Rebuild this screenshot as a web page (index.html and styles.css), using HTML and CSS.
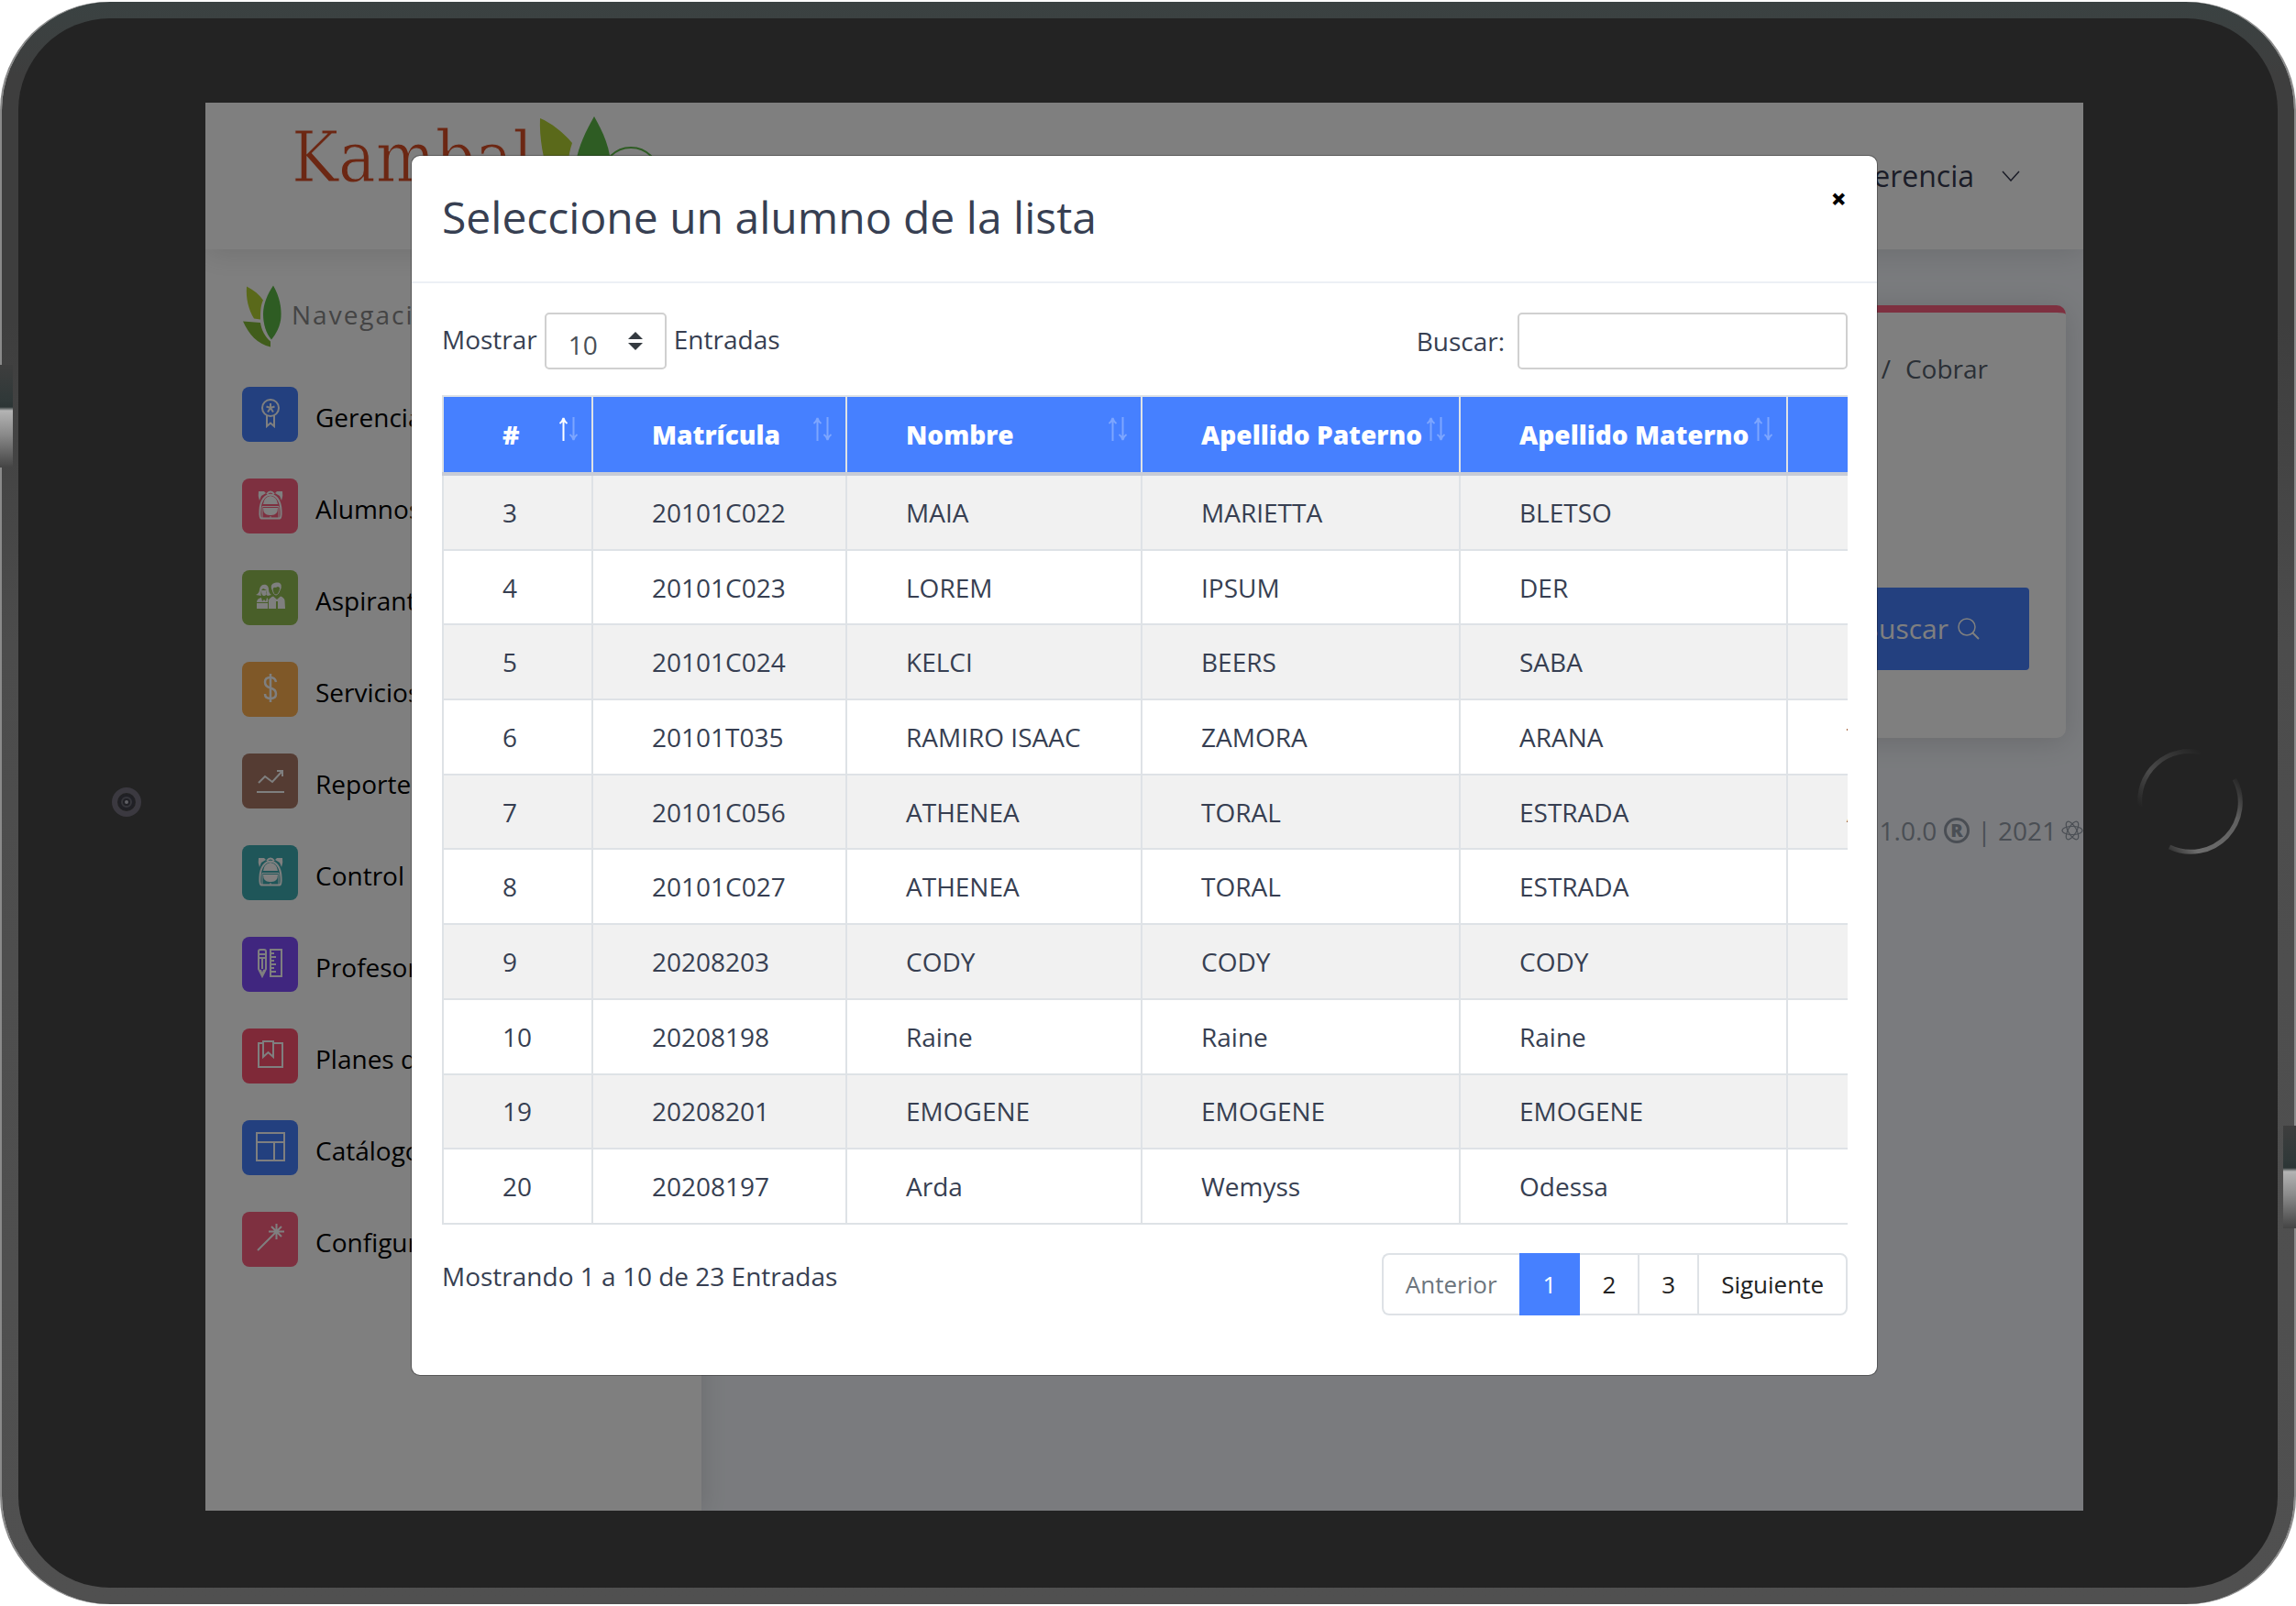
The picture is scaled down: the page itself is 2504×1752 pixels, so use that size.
FILE: index.html
```html
<!DOCTYPE html>
<html lang="es">
<head>
<meta charset="utf-8">
<title>Kambal - Cobrar</title>
<link rel="stylesheet" href="styles.css">
</head>
<body>
<svg class="sprite" aria-hidden="true">
  <symbol id="i-leaves" viewBox="0 0 42 67">
    <path d="M4 1C12 5 18 10 22 16C19 22 19 30 19 37L12 36C6 26 3 14 4 1Z" fill="#b4d334"/>
    <path d="M33 0C40 12 42 24 41.500 34C41 44 36 53 31 59C25 52 22 42 22 31C22 20 27 9 33 0Z" fill="#5cb946"/>
    <path d="M0 39L19 40.500C20 48 24 56 30 61L30 67C16 64 6 53 0 39Z" fill="#82bb37"/>
  </symbol>
  <symbol id="i-backpack" viewBox="0 0 32 32">
    <path fill="none" stroke="currentColor" stroke-width="2" d="M12 4Q16-1 20 4M6 30.500Q4 30 4.500 22C5-1 27-1 27.500 22Q28 30 26 30.500Z"/>
    <path fill="currentColor" d="M3 1L9 1L11 3L6 6L4 11Q2 6 3 1ZM29 1L23 1L21 3L26 6L28 11Q30 6 29 1ZM8 15Q9 7 16 6Q23 7 24 15ZM8 19H24Q24 27 17 27H15Q8 27 8 19Z"/>
    <path fill="none" stroke="currentColor" d="M7 30V17.500H25V30M16 28V30"/>
  </symbol>
  <symbol id="i-layout" viewBox="0 0 32 32">
    <path fill="none" stroke="currentColor" stroke-width="2" d="M1 1H31V31H1ZM1 11H31M20 11V31"/>
  </symbol>
  <symbol id="i-sort-asc" viewBox="0 0 10 26">
    <path fill="none" stroke="currentColor" stroke-width="2" d="M5 26V2M1 7Q4 5 5 1Q6 5 9 7"/>
  </symbol>
  <symbol id="i-sort-desc" viewBox="0 0 10 26">
    <path fill="none" stroke="currentColor" stroke-width="2" d="M5 0V24M1 19Q4 21 5 25Q6 21 9 19"/>
  </symbol>
</svg>

<div class="device">
  <span class="side-key side-key-left"></span>
  <span class="side-key side-key-right"></span>
  <div class="bezel">
    <div class="camera">
      <svg width="34" height="34" viewBox="0 0 34 34"><circle cx="17" cy="17" r="13" fill="none" stroke="#3b3940" stroke-width="6"/><circle cx="17" cy="17" r="9" fill="#202026"/><circle cx="17" cy="17" r="5" fill="none" stroke="#36363b" stroke-width="2"/><circle cx="17" cy="17" r="2" fill="#606066"/></svg>
    </div>

    <div class="screen">
      <header class="topbar">
        <a class="brand" href="#" aria-label="Kambal">
          <span class="brand-name">Kambal</span>
          <svg class="brand-leaves" width="128" height="100" viewBox="0 0 128 100"><path d="M2 4C14 9 27 19 37 31C32 46 32 58 32 74L14 74C5 50 1 24 2 4Z" fill="#b4d334"/><path d="M61 2C70 18 80 38 79 60C78 76 70 88 62 96C50 84 40 72 41 52C44 34 52 18 61 2Z" fill="#5cb946"/><circle cx="101" cy="67" r="31" fill="none" stroke="#5cb946" stroke-width="2"/></svg>
        </a>
        <button class="user-menu" type="button">Gerencia
          <svg width="20" height="12" viewBox="0 0 20 12"><path d="M1 1L10 11L19 1" fill="none" stroke="currentColor" stroke-width="1.500"/></svg>
        </button>
      </header>

      <div class="workspace">
        <nav class="sidebar">
          <div class="nav-title"><svg width="42" height="68"><use href="#i-leaves"/></svg><span>Navegación</span></div>
          <ul class="nav-list">
            <li><a href="#"><span class="tile blue"><svg class="ico" viewBox="0 0 32 32"><g fill="none" stroke="currentColor" stroke-width="2"><circle cx="16" cy="10" r="9"/><path d="M12 18V30L16 26.500L20 30V18M16 5V10M11.500 8.500L16 10L20.500 8.500M16 10L13 14.500M16 10L19 14.500"/></g></svg></span><span class="nav-label">Gerencia</span></a></li>
            <li><a href="#"><span class="tile pink"><svg class="ico"><use href="#i-backpack"/></svg></span><span class="nav-label">Alumnos</span></a></li>
            <li><a href="#"><span class="tile green"><svg class="ico" viewBox="0 0 32 32"><path fill="currentColor" fill-rule="evenodd" d="M0 14Q4 12 4 8C5 1 14 1 14 8Q14 12 17 14L13 15Q10 14 12 9L6 9Q5 14 6 15ZM6 9Q6 15 9 15Q12 15 12 9L8 7Z"/><path fill="currentColor" d="M1 22Q1 18 6 17L7 21L9 19L11 21L12 17Q14 18 13 22ZM1 23H13V29H1ZM14 29V20Q15 17 19 15.500L23 19L27 15.500Q31 17 31.500 20L32 29H24V21H22V29ZM17 7C15 0 25 0 26 1Q29 3 27 8Q25 3 22 6Q19 5 18 9Z"/><path d="M18 7Q19 14 22 14Q25 14 27 6" fill="none" stroke="currentColor"/></svg></span><span class="nav-label">Aspirantes</span></a></li>
            <li><a href="#"><span class="tile orange"><svg class="ico" viewBox="0 0 32 32"><path fill="none" stroke="currentColor" stroke-width="2.500" d="M16 0V31M22 9Q21 4 16 4Q10 4 10 9Q10 14 16 15.500Q22 17 22 22Q22 27 16 27Q10 27 10 22"/></svg></span><span class="nav-label">Servicios</span></a></li>
            <li><a href="#"><span class="tile brown"><svg class="ico" viewBox="0 0 32 32"><path fill="none" stroke="currentColor" stroke-width="2" d="M1 29H31M3 19L10 12L18 18L29 6M23 6H29V12"/></svg></span><span class="nav-label">Reportes</span></a></li>
            <li><a href="#"><span class="tile teal"><svg class="ico"><use href="#i-backpack"/></svg></span><span class="nav-label">Control Escolar</span></a></li>
            <li><a href="#"><span class="tile purple"><svg class="ico" viewBox="0 0 32 32"><path fill="none" stroke="currentColor" stroke-width="2" d="M3 3Q3 1 5 1H9Q11 1 11 3V22L7 30L3 22ZM3 6H11M3 10H11M7 11V22M5 23L7 29L9 23M16 1H28V30H16ZM16 5H20M16 9H22M16 13H20M16 17H22M16 21H20M16 25H22"/></svg></span><span class="nav-label">Profesores</span></a></li>
            <li><a href="#"><span class="tile red"><svg class="ico" viewBox="0 0 32 32"><path fill="none" stroke="currentColor" stroke-width="2" d="M8 3H3V29H29V3H19M8 1H19V18L13.500 13L8 18Z"/></svg></span><span class="nav-label">Planes de</span></a></li>
            <li><a href="#"><span class="tile blue"><svg class="ico"><use href="#i-layout"/></svg></span><span class="nav-label">Catálogos</span></a></li>
            <li><a href="#"><span class="tile pink"><svg class="ico" viewBox="0 0 32 32"><path fill="none" stroke="currentColor" stroke-width="2" d="M2 29L22 9M22.500 0V17M14 8.500H31M17 3L28 14M28 3L17 14"/></svg></span><span class="nav-label">Configuración</span></a></li>
          </ul>
        </nav>

        <main class="content">
          <section class="card">
            <div class="crumbs"><span>/</span><a href="#">Cobrar</a></div>
            <button class="search-btn" type="button">Buscar
              <svg width="24" height="24" viewBox="0 0 24 24"><g fill="none" stroke="currentColor" stroke-width="1.500"><circle cx="10" cy="10" r="9"/><path stroke-width="2" d="M16 16L23 23"/></g></svg>
            </button>
          </section>
          <footer class="foot">
            <span>1.0.0</span>
            <svg width="28" height="28" viewBox="0 0 28 28"><circle cx="14" cy="14" r="12.500" fill="none" stroke="currentColor" stroke-width="3"/><text x="14" y="21" text-anchor="middle" class="reg">R</text></svg>
            <span class="year">| 2021
              <svg width="24" height="24" viewBox="0 0 24 24"><g fill="none" stroke="currentColor" stroke-width="1.200"><ellipse cx="12" cy="12" rx="11" ry="4.500"/><ellipse cx="12" cy="12" rx="11" ry="4.500" transform="rotate(60 12 12)"/><ellipse cx="12" cy="12" rx="11" ry="4.500" transform="rotate(120 12 12)"/></g></svg>
            </span>
          </footer>
        </main>
      </div>

      <div class="backdrop">
        <div class="modal" role="dialog" aria-labelledby="modal-title">
          <div class="modal-head">
            <h1 id="modal-title">Seleccione un alumno de la lista</h1>
            <button class="close" type="button" aria-label="Cerrar">×</button>
          </div>
          <div class="modal-body">
            <div class="controls">
              <div class="control length">
                <label for="rows">Mostrar</label>
                <span class="select-wrap">
                  <select id="rows"><option>10</option></select>
                  <svg width="16" height="20" viewBox="0 0 16 20"><path d="M8 0L16 8H0ZM0 12H16L8 20Z" fill="#343a40"/></svg>
                </span>
                <label for="rows">Entradas</label>
              </div>
              <div class="control search">
                <label for="q">Buscar:</label>
                <input id="q" type="search">
              </div>
            </div>

            <div class="table-wrap">
              <table>
                <colgroup><col class="c-num"><col class="c-mat"><col class="c-nom"><col class="c-pat"><col class="c-ap"><col class="c-last"></colgroup>
                <thead>
                  <tr>
                    <th class="asc">#<span class="sort"><svg><use href="#i-sort-asc"/></svg><svg><use href="#i-sort-desc"/></svg></span></th>
                    <th>Matrícula<span class="sort"><svg><use href="#i-sort-asc"/></svg><svg><use href="#i-sort-desc"/></svg></span></th>
                    <th>Nombre<span class="sort"><svg><use href="#i-sort-asc"/></svg><svg><use href="#i-sort-desc"/></svg></span></th>
                    <th>Apellido Paterno<span class="sort"><svg><use href="#i-sort-asc"/></svg><svg><use href="#i-sort-desc"/></svg></span></th>
                    <th>Apellido Materno<span class="sort"><svg><use href="#i-sort-asc"/></svg><svg><use href="#i-sort-desc"/></svg></span></th>
                    <th>C</th>
                  </tr>
                </thead>
                <tbody>
                  <tr><td>3</td><td>20101C022</td><td>MAIA</td><td>MARIETTA</td><td>BLETSO</td><td></td></tr>
                  <tr><td>4</td><td>20101C023</td><td>LOREM</td><td>IPSUM</td><td>DER</td><td></td></tr>
                  <tr><td>5</td><td>20101C024</td><td>KELCI</td><td>BEERS</td><td>SABA</td><td></td></tr>
                  <tr><td>6</td><td>20101T035</td><td>RAMIRO ISAAC</td><td>ZAMORA</td><td>ARANA</td><td>T</td></tr>
                  <tr><td>7</td><td>20101C056</td><td>ATHENEA</td><td>TORAL</td><td>ESTRADA</td><td>A</td></tr>
                  <tr><td>8</td><td>20101C027</td><td>ATHENEA</td><td>TORAL</td><td>ESTRADA</td><td></td></tr>
                  <tr><td>9</td><td>20208203</td><td>CODY</td><td>CODY</td><td>CODY</td><td></td></tr>
                  <tr><td>10</td><td>20208198</td><td>Raine</td><td>Raine</td><td>Raine</td><td></td></tr>
                  <tr><td>19</td><td>20208201</td><td>EMOGENE</td><td>EMOGENE</td><td>EMOGENE</td><td></td></tr>
                  <tr><td>20</td><td>20208197</td><td>Arda</td><td>Wemyss</td><td>Odessa</td><td></td></tr>
                </tbody>
              </table>
            </div>

            <div class="table-foot">
              <div class="info">Mostrando 1 a 10 de 23 Entradas</div>
              <div class="pager">
                <button type="button" disabled>Anterior</button>
                <button type="button" class="current">1</button>
                <button type="button">2</button>
                <button type="button">3</button>
                <button type="button">Siguiente</button>
              </div>
            </div>
          </div>
        </div>
      </div>
    </div>

    <div class="home">
      <svg width="120" height="120" viewBox="0 0 120 120">
        <defs>
          <linearGradient id="arc-a" x1="0" y1="1" x2="1" y2="0"><stop offset="0" stop-color="#232323"/><stop offset=".4" stop-color="#4a4a4a"/><stop offset="1" stop-color="#232323"/></linearGradient>
          <linearGradient id="arc-b" x1="1" y1="0" x2="0" y2="1"><stop offset="0" stop-color="#232323"/><stop offset=".3" stop-color="#606060"/><stop offset=".8" stop-color="#6c6c6c"/><stop offset="1" stop-color="#303030"/></linearGradient>
        </defs>
        <path d="M6 66A54 54 0 0 1 72 7" fill="none" stroke="url(#arc-a)" stroke-width="5"/>
        <path d="M109 36A54 54 0 0 1 38 110" fill="none" stroke="url(#arc-b)" stroke-width="5"/>
      </svg>
    </div>
  </div>
</div>
</body>
</html>
```
FILE: styles.css
```css
* { box-sizing: border-box; }

body {
  margin: 0;
  background: #fff;
  font: 28px/42px "Open Sans", sans-serif;
  color: #373f52;
}

a { color: inherit; text-decoration: none; }
button, select, input { font: inherit; color: inherit; }
.sprite { position: absolute; width: 0; height: 0; }

/* tablet frame */
.device {
  position: relative;
  display: flex;
  margin: 2px;
  min-height: calc(100vh - 4px);
  padding: 18px;
  border-radius: 118px;
  background: linear-gradient(#3a4242 0, #3e3e3e 80px, #3e3e3e 20%, #4c4c4c 40%, #4e4e4e 60%, #505050);
  box-shadow: -2px 0 0 #8a8a8a, 2px 0 0 #8a8a8a;
}

.side-key {
  position: absolute;
  width: 14px;
  height: 112px;
  background: linear-gradient(#3e3e3e, #2f3838 40px, #2c3535 46px, #b4b4b4 50px, #8a8a8a 76px, #444);
}
.side-key-left { left: -2px; top: 396px; }
.side-key-right { right: -2px; top: 1226px; }

.bezel {
  flex: 1;
  display: grid;
  grid-template-columns: 204px 1fr 212px;
  padding: 92px 0 84px;
  border-radius: 100px;
  background: #232323;
}

.camera, .home { display: grid; place-items: center; }
.camera { padding: 0 0 10px 32px; }
.home { padding: 0 0 12px 20px; }

.screen {
  position: relative;
  display: flex;
  flex-direction: column;
  overflow: hidden;
  background: #f4f7fc;
}

/* application */
.topbar {
  position: relative;
  z-index: 1;
  display: flex;
  justify-content: space-between;
  height: 160px;
  padding: 0 69px 0 94px;
  background: #fff;
  box-shadow: 0 4px 30px rgba(60, 60, 60, .15);
}

.brand { display: flex; align-items: flex-start; gap: 6px; }
.brand-name {
  padding-top: 12px;
  font: 76px/96px "DejaVu Serif Condensed", "DejaVu Serif", serif;
  font-stretch: condensed;
  color: #d94f27;
  -webkit-text-stroke: 1px #fff;
}
.brand-leaves { margin-top: 13px; }

.user-menu {
  display: flex;
  align-items: center;
  gap: 30px;
  border: 0;
  background: none;
  padding: 0;
  font-size: 32px;
  color: #373a50;
}

.workspace { flex: 1; display: flex; }

.sidebar {
  width: 541px;
  background: #fff;
  box-shadow: 2px 0 24px rgba(60, 60, 60, .15);
}

.nav-title {
  display: flex;
  align-items: center;
  gap: 11px;
  padding: 39px 0 0 41px;
  letter-spacing: 2px;
  color: #888;
}
.nav-title span { padding-bottom: 5px; }

.nav-list { list-style: none; margin: 0; padding: 43px 0 0 40px; }
.nav-list a { display: flex; gap: 19px; height: 100px; color: #000; }
.nav-label { padding-top: 12px; }
.tile {
  display: grid;
  place-items: center;
  width: 61px;
  height: 60px;
  padding-bottom: 2px;
  border-radius: 8px;
  color: #fff;
}
.ico { width: 32px; height: 32px; }
.blue { background: #4680ff; }
.pink { background: #fc6180; }
.green { background: #93be52; }
.orange { background: #ffb050; }
.brown { background: #ab7967; }
.teal { background: #3eacb2; }
.purple { background: #804dff; }
.red { background: #ff5370; }

.content { flex: 1; padding-top: 61px; }
.card {
  display: flex;
  flex-direction: column;
  margin: 0 19px;
  padding: 40px 40px 74px;
  border-top: 8px solid #fc6180;
  border-radius: 10px;
  background: #fff;
  box-shadow: 0 4px 30px rgba(60, 60, 60, .18);
}
.crumbs {
  display: flex;
  justify-content: flex-end;
  gap: 16px;
  padding-right: 45px;
  color: #55606c;
}
.search-btn {
  display: flex;
  align-items: center;
  align-self: flex-end;
  gap: 10px;
  height: 90px;
  margin-top: 218px;
  padding: 0 54px;
  border: 0;
  border-radius: 4px;
  background: #4680ff;
  font-size: 30px;
  color: #fff;
}
.foot {
  display: flex;
  justify-content: flex-end;
  align-items: center;
  gap: 8px;
  margin-top: 80px;
  color: #959da9;
}
.foot .reg { font: 800 20px "Open Sans", sans-serif; fill: currentColor; }
.year { display: flex; align-items: center; gap: 5px; }

/* dialog */
.backdrop {
  position: absolute;
  inset: 0;
  z-index: 2;
  padding: 57px 0;
  background: rgba(0, 0, 0, .5);
}
.modal {
  max-width: 1600px;
  margin: 0 auto;
  border: 1px solid rgba(0, 0, 0, .3);
  border-radius: 10px;
  background: #fff;
  background-clip: padding-box;
}
.modal-head {
  display: flex;
  justify-content: space-between;
  align-items: flex-start;
  padding: 31px 33px 34px;
  border-bottom: 2px solid #ecf0f5;
}
h1 { margin: 0; font-size: 48px; line-height: 72px; font-weight: 400; }
.close {
  border: 0;
  background: none;
  padding: 0;
  font-size: 30px;
  line-height: 32px;
  font-weight: 800;
  color: #000;
}

.modal-body { padding: 32px 32px 65px 33px; }
.controls { display: flex; justify-content: space-between; }
.control { display: flex; align-items: center; gap: 8px; }
.length label { padding-bottom: 4px; }
.search { gap: 14px; }
.select-wrap { position: relative; display: flex; }
.select-wrap svg { position: absolute; right: 26px; top: 21px; pointer-events: none; }
select, input {
  height: 62px;
  border: 2px solid #d0d0d0;
  border-radius: 5px;
  background: #fff;
}
select { appearance: none; width: 133px; padding: 8px 24px 0; color: #495057; }
input { width: 360px; padding: 0 16px; }

.table-wrap { overflow: hidden; margin-top: 28px; }
table {
  table-layout: fixed;
  width: 1800px;
  height: 905px;
  border-collapse: collapse;
  border: 2px solid #dee2e6;
}
.c-num { width: 163px; }
.c-mat { width: 277px; }
.c-nom { width: 322px; }
.c-pat { width: 347px; }
.c-ap { width: 357px; }
th, td {
  padding: 18px 0 18px 64px;
  border: 2px solid #dee2e6;
  text-align: left;
  white-space: nowrap;
}
th {
  position: relative;
  padding-top: 20px;
  padding-bottom: 20px;
  border-bottom: 4px solid #c8ccd6;
  background: #4680ff;
  font-weight: 800;
  color: #fff;
}
tbody tr:nth-child(odd) { background: #f1f1f1; }

.sort { position: absolute; right: 14px; top: 22px; display: flex; color: rgba(255, 255, 255, .3); }
.sort svg { width: 11px; height: 26px; }
.asc .sort svg:first-child { color: #fff; }

.table-foot { display: flex; justify-content: space-between; padding-top: 31px; }
.info { padding-top: 4px; }
.pager { display: flex; }
.pager button {
  height: 68px;
  padding: 0 24px;
  border: solid #dee2e6;
  border-width: 2px 0 2px 2px;
  background: #fff;
  font-size: 26px;
  color: #222;
}
.pager button:first-child { border-radius: 8px 0 0 8px; }
.pager button:last-child { border-right-width: 2px; border-radius: 0 8px 8px 0; }
.pager button:disabled { color: #6c757d; }
.pager .current { border-color: #4680ff; border-right-width: 2px; background: #4680ff; color: #fff; }
.pager .current + button { border-left-width: 0; }
```
